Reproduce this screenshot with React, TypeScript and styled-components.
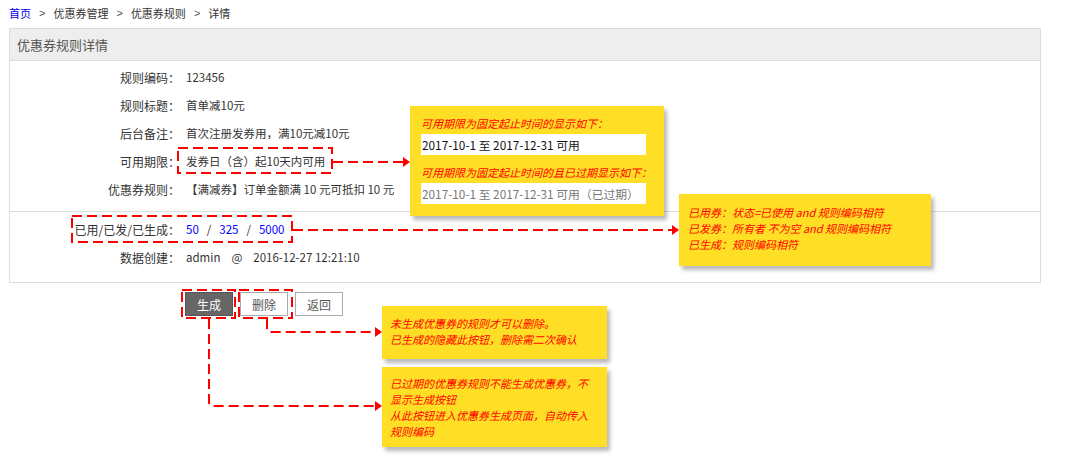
import styled, { createGlobalStyle } from 'styled-components'

const GlobalStyle = createGlobalStyle`
  html, body {
    margin: 0;
    padding: 0;
    background: #fff;
  }
  body {
    font-family: "Noto Sans CJK SC", "Liberation Sans", sans-serif;
    font-size: 12px;
    color: #333;
  }
`

const RED = '#ff0000'

interface Row {
  label: string
  value: React.ReactNode
}

function App() {
  const infoRows: Row[] = [
    { label: '规则编码：', value: '123456' },
    { label: '规则标题：', value: '首单减10元' },
    { label: '后台备注：', value: '首次注册发券用，满10元减10元' },
    { label: '可用期限：', value: '发券日（含）起10天内可用' },
    { label: '优惠券规则：', value: '【满减券】订单金额满 10 元可抵扣 10 元' },
  ]

  const statRows: Row[] = [
    {
      label: '已用/已发/已生成：',
      value: (
        <>
          <Num>50</Num>
          <Slash>/</Slash>
          <Num>325</Num>
          <Slash>/</Slash>
          <Num>5000</Num>
        </>
      ),
    },
    {
      label: '数据创建：',
      value: (
        <>
          admin<At>@</At>2016-12-27 12:21:10
        </>
      ),
    },
  ]

  return (
    <>
      <GlobalStyle />
      <Page>
        <Breadcrumb>
          <Crumb $link>首页</Crumb>
          <Sep>&gt;</Sep>
          <Crumb>优惠券管理</Crumb>
          <Sep>&gt;</Sep>
          <Crumb>优惠券规则</Crumb>
          <Sep>&gt;</Sep>
          <Crumb>详情</Crumb>
        </Breadcrumb>

        <Panel>
          <PanelHeader>优惠券规则详情</PanelHeader>
          <Section $top={2} $bottom={8}>
            {infoRows.map((r) => (
              <InfoRow key={r.label}>
                <Label>{r.label}</Label>
                <Value>{r.value}</Value>
              </InfoRow>
            ))}
          </Section>
          <Section $top={3} $bottom={11} $divider>
            {statRows.map((r) => (
              <InfoRow key={r.label}>
                <Label>{r.label}</Label>
                <Value>{r.value}</Value>
              </InfoRow>
            ))}
          </Section>
        </Panel>

        <Actions>
          <Button $primary>生成</Button>
          <Button>删除</Button>
          <Button>返回</Button>
        </Actions>

        <Connectors width="1069" height="465" viewBox="0 0 1069 465">
          <g fill="none" stroke={RED} strokeWidth="2" strokeDasharray="10 5">
            <rect x="178" y="148" width="154" height="25" />
            <rect x="72" y="216" width="220" height="26" />
            <rect x="182" y="290" width="53" height="28" />
            <rect x="239" y="290" width="53" height="28" />
            <path d="M333 162 H403" />
            <path d="M293 230 H672" />
            <path d="M267 319 V328 Q267 332 271 332 H375" />
            <path d="M209 319 V402 Q209 406 213 406 H375" />
          </g>
          <g fill={RED}>
            <polygon points="403,157 410,162 403,167" />
            <polygon points="672,225 679,230 672,235" />
            <polygon points="375,327 382,332 375,337" />
            <polygon points="375,401 382,406 375,411" />
          </g>
        </Connectors>

        <Note $x={410} $y={106} $w={254} $h={110} $pad="9px 10px 0 11px">
          <NoteLine>可用期限为固定起止时间的显示如下：</NoteLine>
          <Sample>2017-10-1 至 2017-12-31 可用</Sample>
          <NoteLine $gap={9}>可用期限为固定起止时间的且已过期显示如下：</NoteLine>
          <Sample $muted>2017-10-1 至 2017-12-31 可用（已过期）</Sample>
        </Note>

        <Note $x={679} $y={194} $w={252} $h={72} $pad="10px 10px 0 9px">
          <NoteText>
            已用券：状态=已使用 and 规则编码相符
            <br />
            已发券：所有者 不为空 and 规则编码相符
            <br />
            已生成：规则编码相符
          </NoteText>
        </Note>

        <Note $x={382} $y={306} $w={225} $h={53} $pad="9px 16px 0 8px">
          <NoteText>
            未生成优惠券的规则才可以删除。
            <br />
            已生成的隐藏此按钮，删除需二次确认
          </NoteText>
        </Note>

        <Note $x={382} $y={367} $w={225} $h={80} $pad="8px 16px 0 8px">
          <NoteText>
            已过期的优惠券规则不能生成优惠券，不显示生成按钮
            <br />
            从此按钮进入优惠券生成页面，自动传入规则编码
          </NoteText>
        </Note>
      </Page>
    </>
  )
}

export default App

const Page = styled.div`
  position: relative;
  width: 1069px;
  height: 465px;
  padding-left: 9px;
  box-sizing: border-box;
  overflow: hidden;
`

const Breadcrumb = styled.div`
  height: 28px;
  display: flex;
  align-items: center;
  line-height: 16px;
  padding-bottom: 2px;
  box-sizing: border-box;
  font-size: 11px;
`

const Crumb = styled.span<{ $link?: boolean }>`
  color: ${(p) => (p.$link ? '#0000ee' : '#333')};
`

const Sep = styled.span`
  margin: 0 8px;
  color: #555;
  font-family: "Liberation Sans", sans-serif;
  font-size: 11px;
`

const Panel = styled.div`
  width: 1032px;
  border: 1px solid #dddddd;
  box-sizing: border-box;
`

const PanelHeader = styled.div`
  height: 31px;
  background: #eeeeee;
  border-bottom: 1px solid #dddddd;
  padding-left: 7px;
  font-size: 13px;
  color: #555;
  display: flex;
  align-items: center;
`

const Section = styled.div<{ $top: number; $bottom: number; $divider?: boolean }>`
  padding: ${(p) => p.$top}px 0 ${(p) => p.$bottom}px;
  border-top: ${(p) => (p.$divider ? '1px solid #dddddd' : 'none')};
`

const InfoRow = styled.div`
  display: flex;
  align-items: center;
  height: 28px;
`

const Label = styled.div`
  width: 170px;
  text-align: right;
  color: #333;
  white-space: nowrap;
`

const Value = styled.div`
  margin-left: 6px;
  color: #333;
  font-size: 11.5px;
  white-space: nowrap;
  display: flex;
  align-items: center;
`

const Num = styled.span`
  color: #0000ff;
`

const Slash = styled.span`
  margin: 0 8px;
  color: #333;
`

const At = styled.span`
  margin: 0 11px;
`

const Actions = styled.div`
  display: flex;
  gap: 7px;
  margin-top: 9px;
  padding-left: 176px;
`

const Button = styled.div<{ $primary?: boolean }>`
  width: 48px;
  height: 24px;
  box-sizing: border-box;
  display: flex;
  align-items: center;
  justify-content: center;
  font-size: 12px;
  background: ${(p) => (p.$primary ? '#666666' : '#ffffff')};
  color: ${(p) => (p.$primary ? '#ffffff' : '#555')};
  border: 1px solid ${(p) => (p.$primary ? '#555555' : '#aaaaaa')};
`

const Connectors = styled.svg`
  position: absolute;
  left: 0;
  top: 0;
  pointer-events: none;
`

const Note = styled.div<{ $x: number; $y: number; $w: number; $h: number; $pad: string }>`
  position: absolute;
  left: ${(p) => p.$x}px;
  top: ${(p) => p.$y}px;
  width: ${(p) => p.$w}px;
  height: ${(p) => p.$h}px;
  padding: ${(p) => p.$pad};
  box-sizing: border-box;
  background: #ffdf25;
  box-shadow: 3px 4px 4px rgba(0, 0, 0, 0.28);
`

const NoteText = styled.div`
  color: ${RED};
  font-style: italic;
  font-size: 11px;
  line-height: 16px;
`

const NoteLine = styled.div<{ $gap?: number }>`
  color: ${RED};
  font-style: italic;
  font-size: 11px;
  line-height: 16px;
  margin-top: ${(p) => p.$gap ?? 0}px;
  margin-bottom: 3px;
  white-space: nowrap;
`

const Sample = styled.div<{ $muted?: boolean }>`
  width: 224px;
  height: 21px;
  background: #ffffff;
  display: flex;
  align-items: center;
  padding-left: 1px;
  font-size: 11.8px;
  color: ${(p) => (p.$muted ? '#777' : '#111')};
  white-space: nowrap;
  overflow: hidden;
`
